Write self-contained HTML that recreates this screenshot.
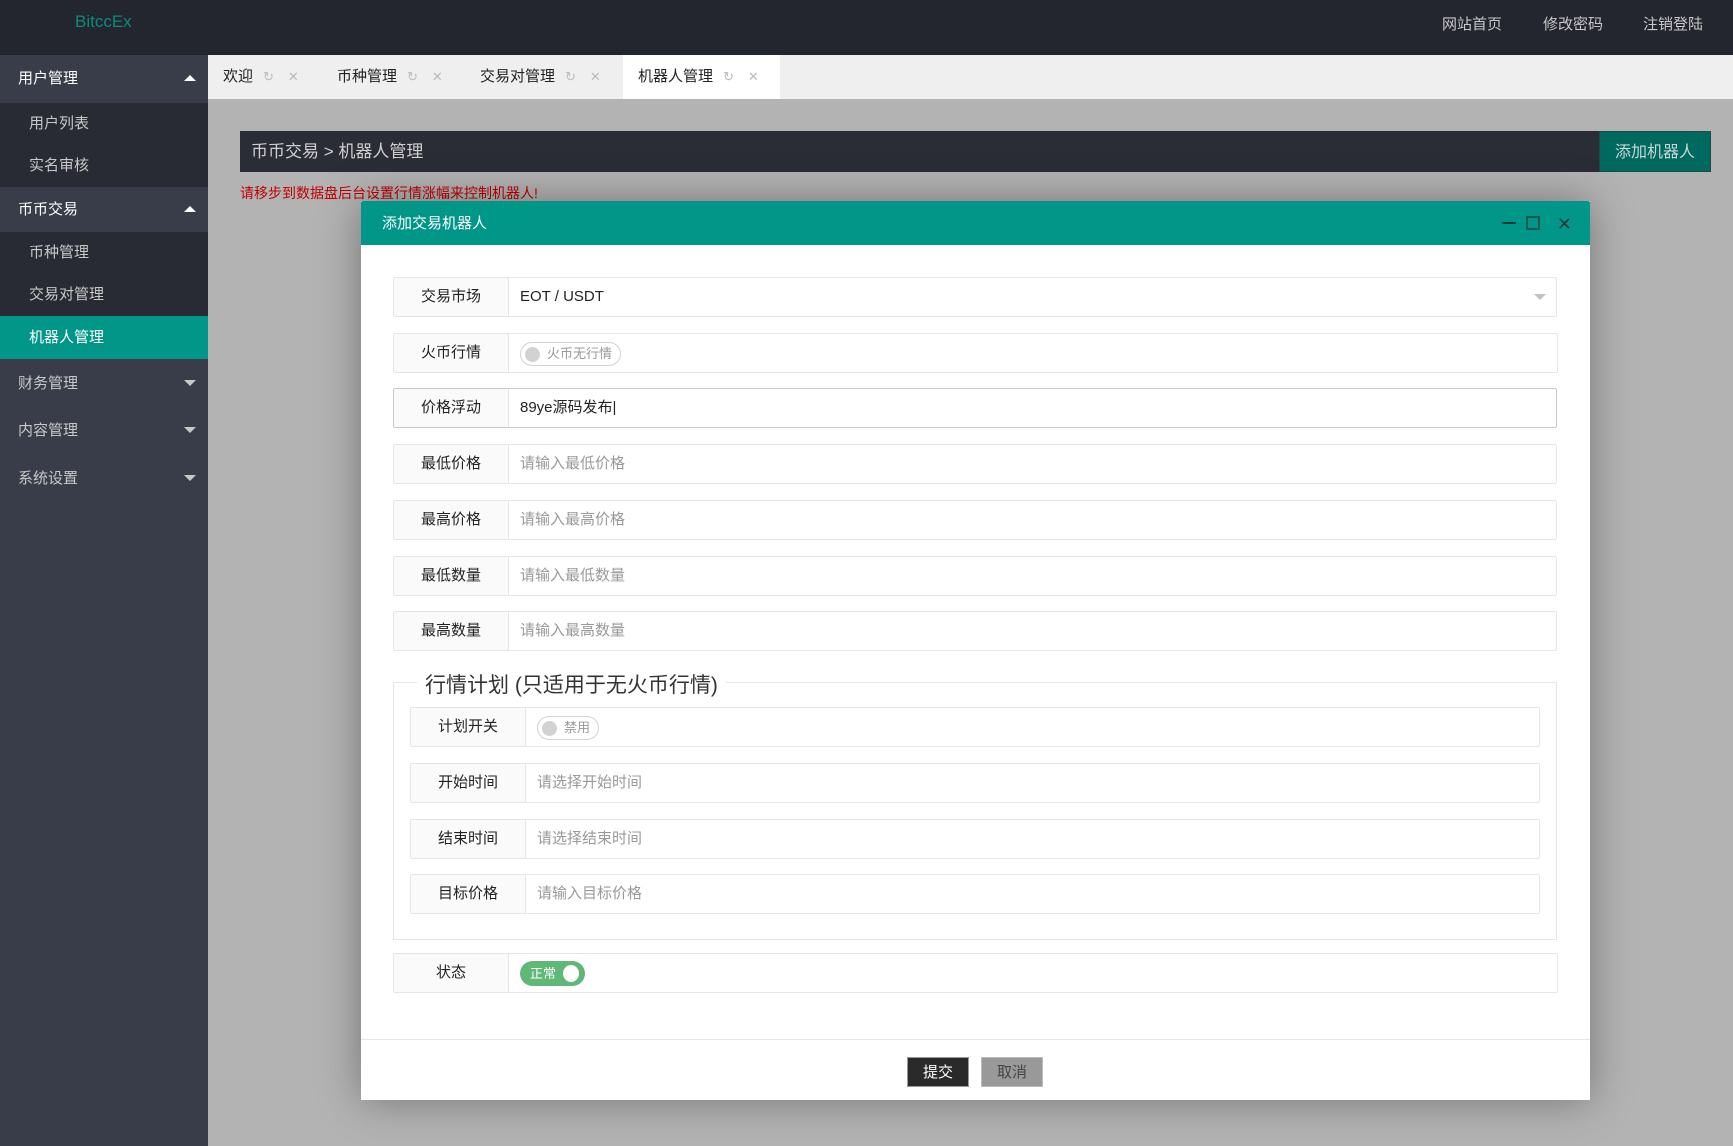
<!DOCTYPE html>
<html><head><meta charset="utf-8"><style>
*{box-sizing:border-box;margin:0;padding:0}
body{width:1733px;height:1146px;overflow:hidden;position:relative;background:#b3b3b3;font-family:"Liberation Sans","Noto Sans CJK SC",sans-serif;font-size:15px}
.abs{position:absolute}
#top{left:0;top:0;width:1733px;height:55px;background:#23262e}
#logo{left:75px;top:12px;color:#0e8a7d;font-size:17px}
.tl{top:13px;color:#c8c8c8;font-size:15px}
#side{left:0;top:55px;width:208px;height:1091px;background:#393d49}
.grp{position:absolute;left:0;width:208px;height:47px;background:#393d49;color:#fff;line-height:47px;padding-left:18px}
.grp .ar{position:absolute;right:12px;top:20px;width:0;height:0;border-left:6px solid transparent;border-right:6px solid transparent}
.up{border-bottom:6px solid #fff}.dn{border-top:6px solid #c8c8c8}
.sub{position:absolute;left:0;width:208px;background:#282b33}
.it{height:42px;line-height:42px;padding-left:29px;color:#c8c8c8}
#tabs{left:208px;top:55px;width:1525px;height:44px;background:#efefef}
.tab{position:absolute;top:55px;height:44px;line-height:44px;color:#222;font-size:15px}
.tab i{font-style:normal;color:#bbb;margin-left:10px;font-size:13px}
#bc{left:240px;top:131px;width:1359px;height:41px;background:#2a2d35;color:#d0d0d0;font-size:17px;line-height:41px;padding-left:11px}
#addbtn{left:1599px;top:131px;width:112px;height:41px;background:#00695f;color:#c8d8d6;font-size:16px;line-height:41px;text-align:center;border:1px solid #1f4a45}
#warn{left:240px;top:183px;color:#c00000;font-size:14px}
#modal{left:361px;top:201px;width:1229px;height:899px;background:#fff;box-shadow:0 0 40px rgba(0,0,0,.35)}
#mh{left:0;top:0;width:1229px;height:44px;background:#009688;color:#fff;font-size:15px;line-height:46px;padding-left:21px;border-radius:2px 2px 0 0}
.row{position:absolute;height:40px;border:1px solid #e6e6e6;background:#fff;border-radius:2px}
.lab{position:absolute;left:0;top:0;height:38px;width:115px;background:#fafafa;border-right:1px solid #e6e6e6;text-align:center;line-height:38px;color:#222;font-size:15px}
.val{position:absolute;left:126px;top:0;line-height:38px;color:#999;font-size:15px}
.sw{position:absolute;top:8px;height:24px;border:1px solid #d2d2d2;border-radius:12px;color:#999;font-size:13px;line-height:22px;padding:0 8px 0 26px}
.sw:before{content:"";position:absolute;left:4px;top:4px;width:15px;height:15px;border-radius:50%;background:#d2d2d2}
#fs{left:32px;top:481px;width:1164px;height:258px;border:1px solid #e6e6e6}
#legend{left:56px;top:468px;background:#fff;padding:0 8px;font-size:21px;color:#333}
.btn{position:absolute;top:856px;width:62px;height:30px;line-height:30px;text-align:center;font-size:15px}
</style></head><body>
<div id="top" class="abs"></div>
<div id="logo" class="abs">BitccEx</div>
<div class="abs tl" style="left:1442px">网站首页</div>
<div class="abs tl" style="left:1543px">修改密码</div>
<div class="abs tl" style="left:1643px">注销登陆</div>

<div id="side" class="abs"></div>
<div class="grp" style="top:55px;height:48px;line-height:48px">用户管理<span class="ar up"></span></div>
<div class="sub" style="top:103px;height:84px"><div class="it">用户列表</div><div class="it">实名审核</div></div>
<div class="grp" style="top:187px;height:45px;line-height:45px">币币交易<span class="ar up" style="top:19px"></span></div>
<div class="sub" style="top:232px;height:127px"><div class="it">币种管理</div><div class="it">交易对管理</div><div class="it" style="background:#009688;color:#fff;height:43px;line-height:43px">机器人管理</div></div>
<div class="grp" style="top:360px;line-height:47px;color:#c8c8c8">财务管理<span class="ar dn"></span></div>
<div class="grp" style="top:407px;line-height:47px;color:#c8c8c8">内容管理<span class="ar dn"></span></div>
<div class="grp" style="top:455px;line-height:47px;color:#c8c8c8">系统设置<span class="ar dn"></span></div>

<div id="tabs" class="abs"></div>
<div class="tab" style="left:223px">欢迎<i>↻</i><i style="margin-left:14px">✕</i></div>
<div class="tab" style="left:337px">币种管理<i>↻</i><i style="margin-left:14px">✕</i></div>
<div class="tab" style="left:480px">交易对管理<i>↻</i><i style="margin-left:14px">✕</i></div>
<div class="tab" style="left:623px;width:157px;background:#fff;padding-left:15px">机器人管理<i>↻</i><i style="margin-left:14px">✕</i></div>

<div id="bc" class="abs">币币交易 &gt; 机器人管理</div>
<div id="addbtn" class="abs">添加机器人</div>
<div id="warn" class="abs">请移步到数据盘后台设置行情涨幅来控制机器人!</div>

<div id="modal" class="abs">
 <div id="mh" class="abs">添加交易机器人
  <span style="position:absolute;right:74px;top:21px;width:14px;height:2px;background:#1a3a36"></span>
  <span style="position:absolute;right:50px;top:15px;width:14px;height:14px;border:2px solid #1a5a52"></span>
  <span style="position:absolute;right:18px;top:0;color:#1a3a36;font-size:18px">✕</span>
 </div>
 <div class="row" style="left:32px;top:76px;width:1164px"><div class="lab">交易市场</div><div class="val" style="color:#222">EOT / USDT</div><span style="position:absolute;right:10px;top:16px;border-left:6px solid transparent;border-right:6px solid transparent;border-top:6px solid #c2c2c2"></span></div>
 <div class="row" style="left:32px;top:132px;width:1165px"><div class="lab">火币行情</div><div class="sw" style="left:126px">火币无行情</div></div>
 <div class="row" style="left:32px;top:187px;width:1164px;border-color:#c8c8c8"><div class="lab">价格浮动</div><div class="val" style="color:#222">89ye源码发布|</div></div>
 <div class="row" style="left:32px;top:243px;width:1164px"><div class="lab">最低价格</div><div class="val">请输入最低价格</div></div>
 <div class="row" style="left:32px;top:299px;width:1164px"><div class="lab">最高价格</div><div class="val">请输入最高价格</div></div>
 <div class="row" style="left:32px;top:355px;width:1164px"><div class="lab">最低数量</div><div class="val">请输入最低数量</div></div>
 <div class="row" style="left:32px;top:410px;width:1164px"><div class="lab">最高数量</div><div class="val">请输入最高数量</div></div>
 <div id="fs" class="abs"></div>
 <div id="legend" class="abs">行情计划 (只适用于无火币行情)</div>
 <div class="row" style="left:49px;top:506px;width:1130px"><div class="lab">计划开关</div><div class="sw" style="left:126px">禁用</div></div>
 <div class="row" style="left:49px;top:562px;width:1130px"><div class="lab">开始时间</div><div class="val">请选择开始时间</div></div>
 <div class="row" style="left:49px;top:618px;width:1130px"><div class="lab">结束时间</div><div class="val">请选择结束时间</div></div>
 <div class="row" style="left:49px;top:673px;width:1130px"><div class="lab">目标价格</div><div class="val">请输入目标价格</div></div>
 <div class="row" style="left:32px;top:752px;width:1165px"><div class="lab">状态</div>
  <div style="position:absolute;left:126px;top:7px;width:65px;height:25px;border-radius:13px;background:#5fb878;color:#fff;font-size:13px;line-height:25px;padding-left:10px">正常<span style="position:absolute;right:6px;top:4px;width:16px;height:17px;border-radius:50%;background:#fff"></span></div></div>
 <div class="abs" style="left:0;top:838px;width:1229px;height:1px;background:#e6e6e6"></div>
 <div class="btn" style="left:546px;background:#2a2a2a;color:#fff;border:1px solid #999">提交</div>
 <div class="btn" style="left:620px;background:#999;color:#444;border:1px solid #bbb">取消</div>
</div>
</body></html>
